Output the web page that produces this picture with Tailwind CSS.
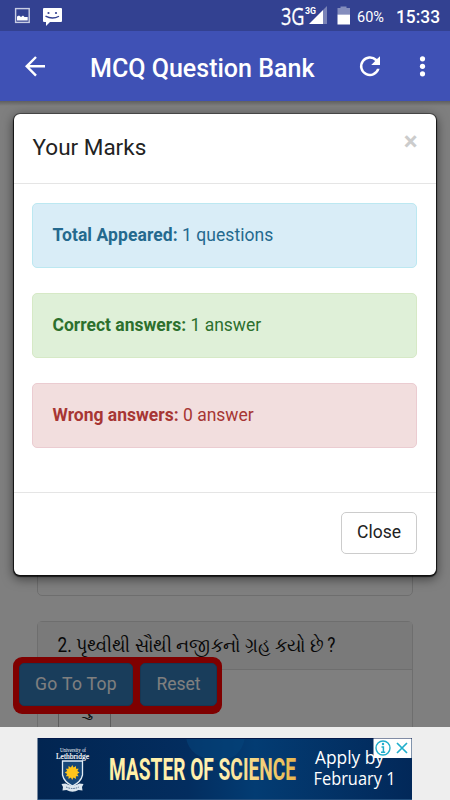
<!DOCTYPE html>
<html lang="en">
<head>
  <meta charset="UTF-8" />
  <meta name="viewport" content="width=device-width, initial-scale=1.0"/>
  <title>MCQ Question Bank</title>
  <script src="https://cdn.jsdelivr.net/npm/@tailwindcss/browser@4"></script>
</head>
<body class="font-[Roboto,'Noto_Sans',sans-serif]">
  <div class="w-[450px] h-[800px] flex flex-col overflow-hidden">

    <!-- status bar -->
    <div class="h-[31px] shrink-0 bg-[#334191] flex items-center text-white">
      <svg class="w-[70px] h-[31px]" viewBox="0 0 70 31">
        <rect x="15.6" y="8.6" width="13.6" height="13.8" fill="none" stroke="#c8cde4" stroke-width="1.4"/>
        <path d="M17 20.500v-4l2-1 2 1.500 2-1.500 1.500 1.500 3.200 0v3.500z" fill="#fff"/>
        <path d="M44 8h17q1 0 1 1v12q0 1-1 1H50l-4 4v-4h-2q-1 0-1-1V9q0-1 1-1z" fill="#fff"/>
        <circle cx="48.500" cy="13" r="1.100" fill="#334191"/><circle cx="56" cy="13" r="1.100" fill="#334191"/>
        <path d="M45.500 16.200q7 3.600 13.500 0" fill="none" stroke="#334191" stroke-width="1.300"/>
      </svg>
      <svg class="ml-auto w-[175px] h-[31px]" viewBox="275 0 175 31" fill="#fff">
        <text x="281" y="24.500" font-family="Open Sans" font-size="23" stroke="#fff" stroke-width=".3" textLength="23.500" lengthAdjust="spacingAndGlyphs">3G</text>
        <text x="305" y="14" font-size="9.500" font-weight="700" textLength="11" lengthAdjust="spacingAndGlyphs">3G</text>
        <path d="M309 24L323 10V24z"/>
        <path d="M323 10l4-4v18h-4z" opacity=".35"/>
        <path d="M337.500 8h3V6.500h6V8h3.500v6.500h-12.500z" opacity=".4"/>
        <rect x="337.500" y="14.500" width="12.500" height="10"/>
        <text x="357" y="21.500" font-size="15" textLength="27" lengthAdjust="spacingAndGlyphs">60%</text>
        <text x="396" y="22.800" font-size="17.500" font-weight="500" textLength="44" lengthAdjust="spacingAndGlyphs">15:33</text>
      </svg>
    </div>

    <!-- app bar -->
    <header class="h-[70px] shrink-0 bg-[#3f51b5] flex items-center">
      <svg class="w-[80px] h-[70px]" viewBox="0 31 80 70" fill="none" stroke="#fff" stroke-width="2.400">
        <path d="M45 66.300H27M36 57L26.700 66.300 36 75.600"/>
      </svg>
      <svg class="w-[370px] h-[70px]" viewBox="80 31 370 70" fill="#fff">
        <text x="90" y="76.500" font-size="25" font-weight="500" textLength="224.500" lengthAdjust="spacingAndGlyphs">MCQ Question Bank</text>
        <path d="M377 59.100A10 10 0 1 0 379.600 68.800H377A7.500 7.500 0 1 1 375.200 60.900L371.200 65H380V56.200z"/>
        <circle cx="422.500" cy="58.800" r="2.600"/><circle cx="422.500" cy="66.300" r="2.600"/><circle cx="422.500" cy="73.800" r="2.600"/>
      </svg>
    </header>

    <main class="relative h-[626px] shrink-0 overflow-hidden bg-white">
      <!-- questions -->
      <div class="px-[37px] pt-[30px]">
        <div class="h-[465px] rounded-[5px] border border-[#ddd]"></div>
        <div class="mt-[25px] h-[160px] rounded-t-[5px] border border-[#ddd]">
          <div class="h-[48px] bg-[#f5f5f5] border-b border-[#ddd]">
            <svg class="w-[370px] h-[47px]" viewBox="38 622 370 47" fill="#111">
              <text x="57.500" y="652" font-size="19.500" textLength="278" lengthAdjust="spacingAndGlyphs">2. પૃથ્વીથી સૌથી નજીકનો ગ્રહ કયો છે ?</text>
            </svg>
          </div>
          <div class="mt-[20px] ml-[20px] w-[53px] h-[60px] border border-[#bbb] text-center text-[19px] leading-[38px] text-[#222]">ગુ</div>
        </div>
      </div>
      <div class="absolute left-[13px] top-[556px] w-[209px] h-[57px] rounded-[9px] bg-[#ff0000] flex gap-[7px] pl-[6px] pt-[6px]">
        <button class="w-[114px] h-[43px] rounded-[5px] border border-[#2e6da4] bg-[#337ab7] text-white text-[17.500px] tracking-[.35px]">Go To Top</button>
        <button class="w-[77px] h-[43px] rounded-[5px] border border-[#2e6da4] bg-[#337ab7] text-white text-[17.500px]">Reset</button>
      </div>

      <!-- backdrop -->
      <div class="absolute inset-0 bg-black/50"></div>
      <div class="absolute inset-x-0 top-0 h-[5px] bg-gradient-to-b from-black/25 to-transparent"></div>

      <!-- marks dialog -->
      <div class="absolute left-[13px] top-[12px] w-[424px] h-[463px] rounded-[7px] border border-black/30 bg-white bg-clip-padding shadow-[0_3px_11px_rgba(0,0,0,.5),0_1px_1px_rgba(0,0,0,.7)] text-[17.500px] leading-[25px]">
        <div class="h-[70px] pl-[18.500px] pr-[18.500px] flex items-start justify-between border-b border-[#e5e5e5]">
          <h4 class="mt-[21px] text-[22.500px] text-[#222]">Your Marks</h4>
          <button class="mt-[14px] text-[26px] leading-[27px] font-bold text-[#ccc]">&times;</button>
        </div>
        <div class="h-[309px] pl-[18px] pr-[19px] pt-[19px] flex flex-col gap-[25px] border-b border-[#e5e5e5]">
          <div class="h-[65px] px-[19.500px] py-[19px] rounded-[5px] border border-[#bce8f1] bg-[#d9edf7] text-[#24698e] tracking-[.04px]"><b class="tracking-[.08px]">Total Appeared:</b> 1 questions</div>
          <div class="h-[65px] px-[19.500px] py-[19px] rounded-[5px] border border-[#d6e9c6] bg-[#dff0d8] text-[#2c6f2d]"><b>Correct answers:</b> 1 answer</div>
          <div class="h-[65px] px-[19.500px] py-[19px] rounded-[5px] border border-[#ebccd1] bg-[#f2dede] text-[#a73634]"><b>Wrong answers:</b> 0 answer</div>
        </div>
        <div class="flex justify-end pt-[19px] pr-[19px]">
          <button class="w-[76px] h-[42px] rounded-[5px] border border-[#ccc] text-[#222] pb-px">Close</button>
        </div>
      </div>
    </main>

    <!-- ad banner -->
    <footer class="h-[73px] shrink-0 bg-[#eee] pl-[37px] pt-[10px]">
      <svg class="w-[375px] h-[63px]" viewBox="37 737 375 63" fill="#fff">
        <defs>
          <linearGradient id="sea"><stop stop-color="#022551"/><stop offset=".4" stop-color="#032d5f"/><stop offset=".58" stop-color="#033c73"/><stop offset="1" stop-color="#022859"/></linearGradient>
          <linearGradient id="gold"><stop stop-color="#fff0a6"/><stop offset=".6" stop-color="#fff0b0"/><stop offset="1" stop-color="#e9b84e"/></linearGradient>
        </defs>
        <rect x="37.500" y="738" width="375" height="62" fill="url(#sea)"/>
        <path d="M186 738Q190 758 215 760T245 738z" fill="#05467b" opacity=".55"/>
        <path d="M38 738.500H412" stroke="#02184a"/>
        <path d="M38 799.500H412" stroke="#234f7e"/>
        <text x="60" y="751.500" font-family="Liberation Serif" font-size="5.500" textLength="26" lengthAdjust="spacingAndGlyphs">University of</text>
        <text x="56" y="758.500" font-family="Liberation Serif" font-size="9" stroke="#fff" stroke-width=".2" textLength="33" lengthAdjust="spacingAndGlyphs">Lethbridge</text>
        <path d="M62.500 761H82.500V775Q81 782 72.500 786Q64 782 62.500 775z" fill="#174779" stroke="#e3edf5" stroke-width="1.300"/>
        <path d="M72.300 765l1.300 2.500 2.400-1.500v2.800l2.700-.1-1.400 2.400 2.300 1.400-2.400 1.400 1.400 2.300-2.700 0v2.700l-2.400-1.300-1.300 2.300-1.300-2.300-2.400 1.300v-2.700l-2.700 0 1.400-2.300-2.400-1.400 2.400-1.400-1.400-2.400 2.700.1v-2.800l2.400 1.500z" fill="#ffc51b"/>
        <path d="M61.500 784l4-.5q7 4 14 0l4 .5-1.500 3 .5 3.500-4-.5q-6 3.500-12 0l-4 .5.500-3.500z" fill="#dce6ef"/>
        <path d="M66 787q6.500 3 13 0" fill="none" stroke="#486689" stroke-dasharray="1.500 1"/>
        <text x="109" y="779.700" font-family="Roboto" font-size="31" font-weight="700" fill="url(#gold)" textLength="187" lengthAdjust="spacingAndGlyphs">MASTER OF SCIENCE</text>
        <g font-family="Open Sans" font-size="18">
          <text x="315" y="763.500" textLength="69" lengthAdjust="spacingAndGlyphs">Apply by</text>
          <text x="313.500" y="784.500" textLength="82" lengthAdjust="spacingAndGlyphs">February 1</text>
        </g>
        <rect x="373.500" y="738.500" width="38" height="19.500" fill="#fff"/>
        <g fill="none" stroke="#20aecb" stroke-width="1.400">
          <circle cx="383" cy="748" r="7"/>
          <path d="M397 743l10 10M407 743l-10 10" stroke-width="1.700"/>
          <path d="M381.500 747H383.400V752M381 752.200H385.200" stroke-width="1.500"/>
        </g>
        <circle cx="383" cy="744" r="1.200" fill="#20aecb"/>
      </svg>
    </footer>
  </div>
</body>
</html>
